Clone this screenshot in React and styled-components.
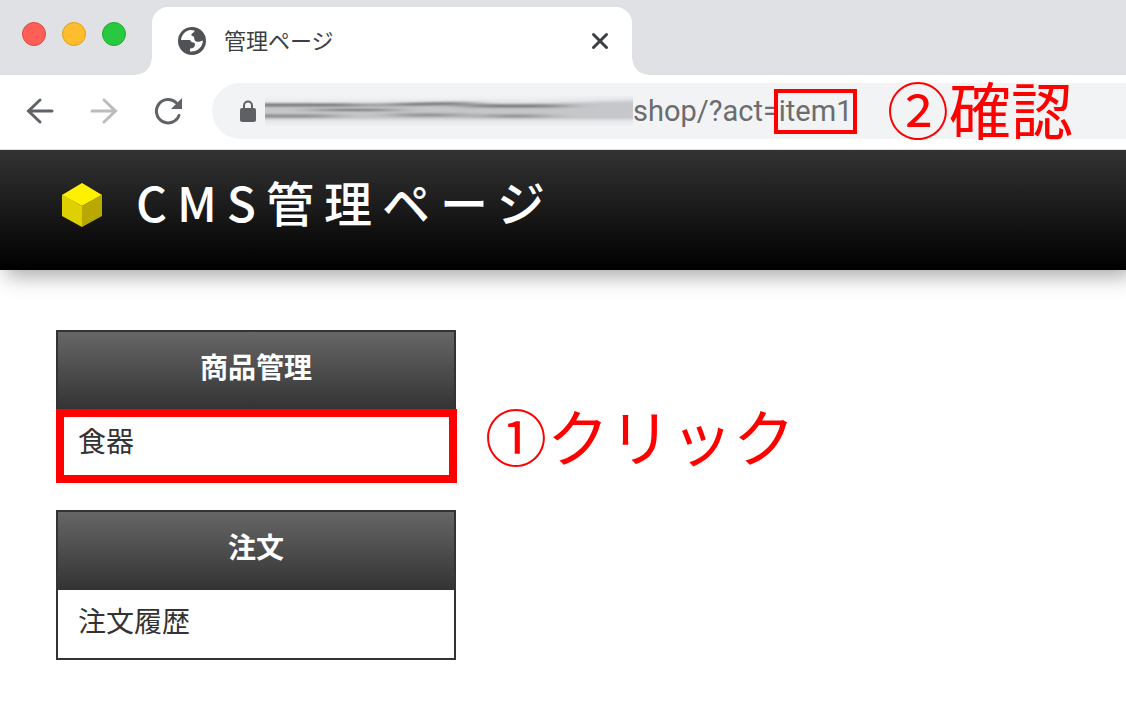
import React, { useState } from "react";
import styled, { createGlobalStyle } from "styled-components";

const GlobalStyle = createGlobalStyle`
  * {
    box-sizing: border-box;
  }
  body {
    margin: 0;
    background: #fff;
    color: #333;
    font-family: "Noto Sans CJK JP", sans-serif;
    overflow-x: hidden;
  }
`;

const TabStrip = styled.div`
  display: flex;
  align-items: flex-end;
  height: 75px;
  background: #dfe1e5;
`;

const WindowButtons = styled.div`
  display: flex;
  align-self: flex-start;
  gap: 16px;
  width: 152px;
  padding: 22px 22px 0;
`;

const WindowButton = styled.button`
  width: 24px;
  height: 24px;
  padding: 0;
  border: 1px solid ${(props) => props.$edge};
  border-radius: 50%;
  background: ${(props) => props.$fill};
`;

const Tab = styled.div`
  position: relative;
  display: flex;
  align-items: center;
  width: 480px;
  height: 68px;
  padding: 0 16px 0 24px;
  border-radius: 16px 16px 0 0;
  background: #fff;

  &::before,
  &::after {
    content: "";
    position: absolute;
    bottom: 0;
    width: 16px;
    height: 16px;
  }
  &::before {
    right: 100%;
    background: radial-gradient(circle at 0 0, transparent 15px, #fff 16px);
  }
  &::after {
    left: 100%;
    background: radial-gradient(circle at 100% 0, transparent 15px, #fff 16px);
  }
`;

const TabTitle = styled.span`
  flex: 1;
  margin-left: 16px;
  padding-bottom: 4px;
  color: #3c4043;
  font-size: 22px;
  line-height: 32px;
`;

const IconButton = styled.button`
  display: flex;
  align-items: center;
  justify-content: center;
  width: 32px;
  height: 32px;
  padding: 0;
  border: none;
  background: none;
`;

const Toolbar = styled.div`
  position: relative;
  z-index: 1;
  display: flex;
  align-items: center;
  gap: 32px;
  height: 75px;
  padding: 0 0 2px 24px;
  border-bottom: 1px solid #dadce0;
  background: #fff;
`;

const AddressBar = styled.div`
  position: relative;
  display: flex;
  flex: 1;
  align-items: center;
  height: 56px;
  margin-left: -4px;
  padding-left: 26px;
  border-radius: 28px 0 0 28px;
  background: #f1f3f4;
`;

const HiddenHost = styled.svg`
  flex: none;
  margin-left: 7px;
`;

const AddressInput = styled.input`
  flex: 1;
  min-width: 0;
  padding: 0;
  border: none;
  outline: none;
  background: transparent;
  color: #6b6c6e;
  font-family: Roboto, sans-serif;
  font-size: 29px;
  line-height: 40px;
`;

const Frame = styled.div`
  position: absolute;
  border: ${(props) => props.$thickness}px solid #f00;
  pointer-events: none;
`;

const AddressFrame = styled(Frame)`
  left: 562px;
  top: 6px;
  width: 83px;
  height: 45px;
`;

const MenuFrame = styled(Frame)`
  inset: -1px -3px -5px -2px;
`;

const Callout = styled.span`
  position: absolute;
  top: -7px;
  color: #f00;
  font-size: 62px;
  line-height: 64px;
  white-space: nowrap;
  pointer-events: none;
`;

const AddressCallout = styled(Callout)`
  left: 675px;
`;

const MenuCallout = styled(Callout)`
  left: 427px;
`;

const PageHeader = styled.header`
  display: flex;
  align-items: flex-start;
  gap: 32px;
  height: 120px;
  padding: 16px 60px;
  background: linear-gradient(#333, #000);
  box-shadow: 6px 6px 20px rgba(0, 0, 0, 0.35);
`;

const CubeLogo = styled.svg`
  flex: none;
  margin-top: 16px;
`;

const PageTitle = styled.h1`
  margin: 0;
  color: #fff;
  font-size: 48px;
  font-weight: 500;
  line-height: 70px;
  letter-spacing: 10px;
`;

const SideMenu = styled.nav`
  display: flex;
  flex-direction: column;
  gap: 30px;
  width: 456px;
  padding: 60px 0 56px 56px;
`;

const MenuGroup = styled.section`
  border: 2px solid #333;
`;

const MenuHeading = styled.h2`
  height: 78px;
  margin: 0;
  padding-top: 14px;
  background: linear-gradient(#666, #333);
  color: #fff;
  font-size: 28px;
  font-weight: 700;
  line-height: 40px;
  text-align: center;
`;

const MenuItem = styled.div`
  position: relative;
`;

const MenuLink = styled.a`
  display: block;
  height: 68px;
  padding: 10px 20px;
  color: #333;
  font-size: 28px;
  line-height: 40px;
  text-decoration: none;
`;

const GlobeIcon = () => (
  <svg width="32" height="32" viewBox="0 0 32 32" aria-hidden="true">
    <circle cx="16" cy="16" r="14" fill="#505256" />
    <path
      d="M5 15C5.500 10 9 6 14 5L18.500 5.500C18.500 8 16 7.500 15.500 9.500C14.500 11 17 10.500 18 12L18.500 15C20 17.500 23 17 26.800 15.500C27 22 21 27.200 14 26.500V23.500C17 23.500 19 22 19 19.500C19 17 16.500 18 15 16.500L14 15Z"
      fill="#fff"
    />
  </svg>
);

const App = () => {
  const [address, setAddress] = useState("shop/?act=item1");

  return (
    <>
      <GlobalStyle />
      <TabStrip>
        <WindowButtons>
          <WindowButton aria-label="閉じる" $fill="#ff5f57" $edge="#e2463f" />
          <WindowButton aria-label="しまう" $fill="#febc2e" $edge="#e1a116" />
          <WindowButton aria-label="拡大" $fill="#28c840" $edge="#1dad2b" />
        </WindowButtons>
        <Tab>
          <GlobeIcon />
          <TabTitle>管理ページ</TabTitle>
          <IconButton aria-label="タブを閉じる">
            <svg width="24" height="24" viewBox="0 0 24 24">
              <path
                d="M5.500 5.500l13 13M18.500 5.500l-13 13"
                stroke="#3c4043"
                strokeWidth="3"
                strokeLinecap="round"
              />
            </svg>
          </IconButton>
        </Tab>
      </TabStrip>
      <Toolbar>
        <IconButton aria-label="戻る">
          <svg width="32" height="32" viewBox="0 0 32 32" fill="none">
            <path
              d="M28 16H5M16 5L4.500 16 16 27"
              stroke="#5f6368"
              strokeWidth="3"
              strokeLinecap="round"
            />
          </svg>
        </IconButton>
        <IconButton aria-label="進む">
          <svg width="32" height="32" viewBox="0 0 32 32" fill="none">
            <path
              d="M4 16h23M16 5l11.500 11L16 27"
              stroke="#babcbe"
              strokeWidth="3"
              strokeLinecap="round"
            />
          </svg>
        </IconButton>
        <IconButton aria-label="再読み込み">
          <svg width="32" height="32" viewBox="0 0 32 32" fill="none">
            <path
              d="M27 20.500A11.700 11.700 0 1 1 24.500 8"
              stroke="#5f6368"
              strokeWidth="3"
              strokeLinecap="round"
            />
            <path d="M30 3v11H19z" fill="#5f6368" />
          </svg>
        </IconButton>
        <AddressBar>
          <svg width="20" height="24" viewBox="0 0 20 24" aria-hidden="true">
            <rect x="2" y="9" width="16" height="14" rx="2" fill="#5f6063" />
            <path
              d="M6 10V6.500a4 4 0 0 1 8 0V10"
              fill="none"
              stroke="#5f6063"
              strokeWidth="2"
            />
          </svg>
          <HiddenHost width="368" height="30" viewBox="0 0 368 30" aria-hidden="true">
            <defs>
              <filter id="smear" x="-10%" y="-50%" width="120%" height="200%">
                <feGaussianBlur stdDeviation="18 1" />
              </filter>
              <filter id="haze" x="-10%" y="-50%" width="120%" height="200%">
                <feGaussianBlur stdDeviation="12 3" />
              </filter>
            </defs>
            <path d="M-40 6L280 5 410 0v26H-40z" fill="#dcdfe0" filter="url(#haze)" />
            <g filter="url(#smear)">
              <path d="M-40 8L250 8 410 4v19H-40z" fill="#c6c7ca" />
              <path d="M-60 9h160M120 9l85-2M200 10h100" stroke="#6d6e70" strokeWidth="3" />
              <path d="M50 14h80" stroke="#505154" strokeWidth="2" />
              <path d="M-60 20h130M130 19h65M220 20h60" stroke="#858588" strokeWidth="3" />
            </g>
          </HiddenHost>
          <AddressInput
            type="text"
            aria-label="アドレス"
            value={address}
            onChange={(e) => setAddress(e.target.value)}
          />
          <AddressFrame $thickness={4} />
          <AddressCallout>②確認</AddressCallout>
        </AddressBar>
      </Toolbar>
      <PageHeader>
        <CubeLogo width="44" height="46" viewBox="0 0 44 46" aria-hidden="true">
          <path d="M22 1l20 12-20 11L2 13z" fill="#fff000" />
          <path d="M2 12.500l20 11.500v21L2 34z" fill="#dfd000" />
          <path d="M42 12.500L22 24v21l20-11z" fill="#b8a800" />
        </CubeLogo>
        <PageTitle>CMS管理ページ</PageTitle>
      </PageHeader>
      <SideMenu>
        <MenuGroup>
          <MenuHeading>商品管理</MenuHeading>
          <MenuItem>
            <MenuLink href="#item1">食器</MenuLink>
            <MenuFrame $thickness={8} />
            <MenuCallout>①クリック</MenuCallout>
          </MenuItem>
        </MenuGroup>
        <MenuGroup>
          <MenuHeading>注文</MenuHeading>
          <MenuItem>
            <MenuLink href="#history">注文履歴</MenuLink>
          </MenuItem>
        </MenuGroup>
      </SideMenu>
    </>
  );
};

export default App;
